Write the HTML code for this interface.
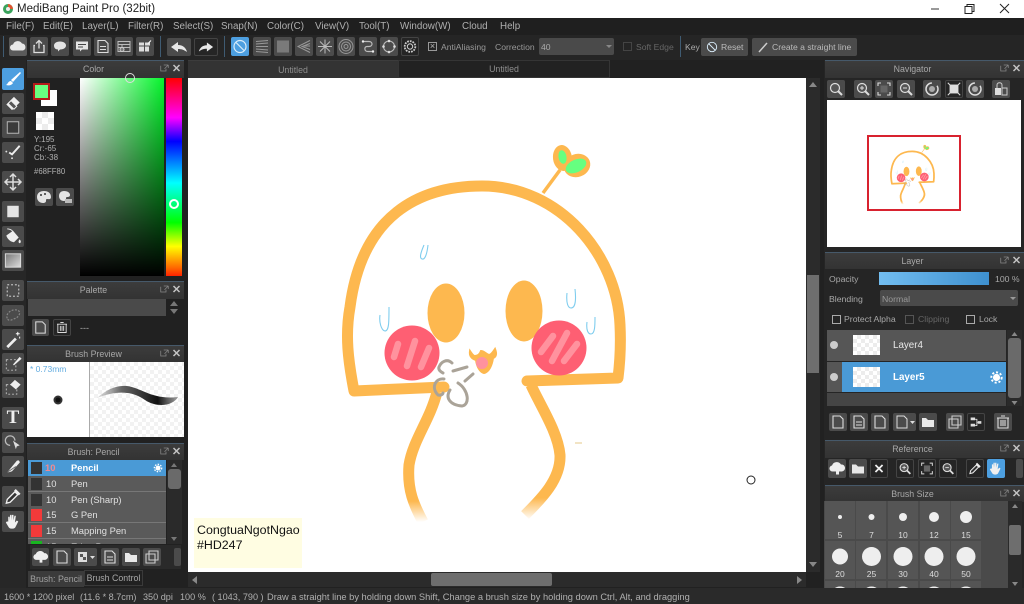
<!DOCTYPE html>
<html><head><meta charset="utf-8"><title>MediBang Paint Pro</title>
<style>
html,body{margin:0;padding:0;background:#222}
#r{position:relative;width:1024px;height:604px;overflow:hidden;background:#212121;font-family:"Liberation Sans",sans-serif;font-size:10px;color:#b0b0b0}
#r div,#r span,#r i{position:absolute;display:block;font-style:normal}
.t{white-space:nowrap;line-height:14px}
.m{font-size:9.800px;top:20px;color:#b0b0b0}
.tb{font-size:8.600px;top:40px;color:#999}
.p{font-size:8.700px;color:#a8a8a8}
.st{font-size:9.100px;top:590px;color:#b0b0b0}
.br{font-size:9.400px;color:#e0e0e0}
.b{background:#4b4b4b;border-radius:2px}
.d{background:#252525;border:1px solid #444;box-sizing:border-box;border-radius:2px}
.b svg,.d svg{position:absolute;left:0;top:0;width:100%;height:100%}
.h{background:linear-gradient(#3c3c3c,#333);border-top:1px solid #46596a;box-sizing:border-box;text-align:center;line-height:17px;color:#a8a8a8;font-size:8.800px;padding-right:24px;white-space:nowrap}
.row{left:0;width:138px;height:15px;background:#5a5a5a;border-bottom:1px solid #777}
.c{background:#555;width:30px;height:38px}
.ck{background:repeating-conic-gradient(#ececec 0 25%,#fff 0 50%) 0 0/8px 8px}
</style></head><body><div id="r">
<svg width="0" height="0" style="position:absolute"><defs>
<symbol id="cloud" viewBox="0 0 18 18"><path d="M4 13a3 3 0 0 1 0-6 5 5 0 0 1 9-1 3.600 3.600 0 0 1 1 7z" fill="#e8e8e8"/></symbol>
<symbol id="share" viewBox="0 0 18 18"><path d="M5 8H4v7h10V8h-1M9 11V3M6 6l3-3 3 3" fill="none" stroke="#ddd" stroke-width="1.300"/></symbol>
<symbol id="bub" viewBox="0 0 18 18"><path d="M9 4c4 0 6 2 6 4s-2 4-6 4l-2 2v-2c-3 0-4-2-4-4s2-4 6-4z" fill="#e4e4e4"/></symbol>
<symbol id="com" viewBox="0 0 18 18"><path d="M3 4h12v8H9l-2 2v-2H3z" fill="#e4e4e4"/><path d="M5 7h8M5 9.500h5" stroke="#444"/></symbol>
<symbol id="doc" viewBox="0 0 18 18"><path d="M4 3h7l3 3v9H4zM6 9h6M6 12h6" fill="none" stroke="#ddd" stroke-width="1.100"/></symbol>
<symbol id="tab" viewBox="0 0 18 18"><path d="M3 4h12v10H3zM3 7h12M3 10h12M7 7v7" fill="none" stroke="#bbb"/><circle cx="7" cy="12" r="2" fill="#777" stroke="#ccc"/></symbol>
<symbol id="mat" viewBox="0 0 18 18"><path d="M3 5h5v3H3zM9 5h5v3H9zM3 9h5v5H3zM9 9h4v5H9z" fill="#ddd"/><path d="M12 6l3-3" stroke="#fff"/></symbol>
<symbol id="und" viewBox="0 0 24 18"><path d="M11 4L4 9l7 5v-3c4 0 6 1 9 3-1-4-4-7-9-7z" fill="#e8e8e8"/></symbol>
<symbol id="red" viewBox="0 0 24 18"><path d="M13 4l7 5-7 5v-3c-4 0-6 1-9 3 1-4 4-7 9-7z" fill="#e8e8e8"/></symbol>
<symbol id="no" viewBox="0 0 18 18"><circle cx="9" cy="9" r="6" fill="none" stroke="#d9ecfa" stroke-width="1.200"/><path d="M5 5l8 8" stroke="#d9ecfa" stroke-width="1.200"/></symbol>
<symbol id="hl" viewBox="0 0 18 18"><path d="M3 4l12-1M3 6.500l12-1M3 9h12M3 11.500l12 1M3 14l12 1" stroke="#999"/></symbol>
<symbol id="vl" viewBox="0 0 18 18"><path d="M4 3v12M6 3v12M8 3v12M10 3v12M12 3v12M14 3v12" stroke="#aaa"/></symbol>
<symbol id="pe" viewBox="0 0 18 18"><path d="M15 3L3 9l12 6M15 6L7 9l8 3M15 8.500H9" fill="none" stroke="#999"/></symbol>
<symbol id="rad" viewBox="0 0 18 18"><path d="M9 2v14M2 9h14M4 4l10 10M14 4L4 14" stroke="#bbb"/></symbol>
<symbol id="con" viewBox="0 0 18 18"><circle cx="9" cy="9" r="7" fill="none" stroke="#999"/><circle cx="9" cy="9" r="4.500" fill="none" stroke="#999"/><circle cx="9" cy="9" r="2" fill="none" stroke="#999"/></symbol>
<symbol id="cur" viewBox="0 0 18 18"><path d="M4 4h6c4 0 4 5 0 5H8c-3 0-3 5 1 5h5" fill="none" stroke="#bbb" stroke-width="1.200"/><circle cx="4" cy="4" r="1.200" fill="#eee"/><circle cx="14" cy="14" r="1.200" fill="#eee"/></symbol>
<symbol id="ring" viewBox="0 0 18 18"><circle cx="9" cy="9" r="5.500" fill="none" stroke="#bbb" stroke-width="1.100"/><circle cx="9" cy="3.500" r="1.300" fill="#ddd"/><circle cx="14.500" cy="9" r="1.300" fill="#ddd"/><circle cx="9" cy="14.500" r="1.300" fill="#ddd"/><circle cx="3.500" cy="9" r="1.300" fill="#ddd"/></symbol>
<symbol id="gear" viewBox="0 0 18 18"><circle cx="9" cy="9" r="3" fill="none" stroke="#ccc" stroke-width="1.200"/><circle cx="9" cy="9" r="6" fill="none" stroke="#ccc" stroke-width="2" stroke-dasharray="2 1.100"/></symbol>
<symbol id="brush" viewBox="0 0 22 22"><path d="M18 4L9 12l2 2 8-9z" fill="#fff"/><path d="M9 13c-3 0-3 3-5 4 3 1 6 0 7-2z" fill="#fff"/></symbol>
<symbol id="er" viewBox="0 0 22 22"><path d="M12 4l6 6-8 8-6-6z" fill="#eee"/><path d="M9 8l6 6-3 3-6-6z" fill="#555" stroke="#eee"/></symbol>
<symbol id="sq" viewBox="0 0 22 22"><rect x="5" y="5" width="12" height="12" fill="#3a3a3a" stroke="#bbb"/></symbol>
<symbol id="ln" viewBox="0 0 22 22"><path d="M18 4L10 13l-3-2" fill="none" stroke="#eee" stroke-width="2"/><circle cx="4" cy="10" r="1" fill="#ddd"/><circle cx="10" cy="17" r="1" fill="#ddd"/></symbol>
<symbol id="mv" viewBox="0 0 22 22"><path d="M11 3v16M3 11h16M8 6l3-3 3 3M8 16l3 3 3-3M6 8l-3 3 3 3M16 8l3 3-3 3" fill="none" stroke="#ddd" stroke-width="1.500"/></symbol>
<symbol id="fs" viewBox="0 0 22 22"><rect x="5" y="5" width="12" height="12" fill="#e4e4e4"/></symbol>
<symbol id="bk" viewBox="0 0 22 22"><path d="M4 10l7-5 6 7-5 5c-3 0-7-3-8-7z" fill="#eee"/><path d="M5 3c2 0 5 1 6 3" stroke="#eee" fill="none"/><path d="M18 14c2 2 1 4 0 4s-2-2 0-4z" fill="#eee"/></symbol>
<symbol id="gr" viewBox="0 0 22 22"><defs><linearGradient id="gg" x1="0" x2="1" y1="0" y2="1"><stop offset="0" stop-color="#777"/><stop offset="1" stop-color="#ddd"/></linearGradient></defs><rect x="3" y="4" width="16" height="14" fill="url(#gg)" stroke="#ddd"/></symbol>
<symbol id="sl" viewBox="0 0 22 22"><rect x="5" y="5" width="12" height="12" fill="none" stroke="#bbb" stroke-width="1.300" stroke-dasharray="2 2"/></symbol>
<symbol id="ls" viewBox="0 0 22 22"><path d="M5 14c-2-4 3-9 8-9s6 3 4 6-4 3-6 4-5 2-6-1z" fill="none" stroke="#888" stroke-width="1.200" stroke-dasharray="2 1.500"/></symbol>
<symbol id="wd" viewBox="0 0 22 22"><path d="M4 18l9-9 2 2-9 9z" fill="#eee"/><path d="M16 3v4M14 5h4M18 8v2" stroke="#fff"/></symbol>
<symbol id="spn" viewBox="0 0 22 22"><rect x="4" y="7" width="10" height="11" fill="none" stroke="#bbb" stroke-dasharray="2 2"/><path d="M18 4l-7 8 1 1 8-7z" fill="#eee"/></symbol>
<symbol id="ser" viewBox="0 0 22 22"><rect x="4" y="8" width="11" height="10" fill="none" stroke="#bbb" stroke-dasharray="2 2"/><path d="M13 3l6 5-5 5-6-5z" fill="#eee"/></symbol>
<symbol id="tool" viewBox="0 0 22 22"><path d="M8 14a5 5 0 1 1 5-5" fill="none" stroke="#bbb" stroke-width="1.300"/><path d="M11 9l7 5-3 1-1 3z" fill="#ddd"/></symbol>
<symbol id="kn" viewBox="0 0 22 22"><path d="M5 17L15 5c2-1 3 0 3 2L10 16c-2 1-4 1-5 1z" fill="#eee"/><path d="M5 17l9-6" stroke="#666"/></symbol>
<symbol id="ey" viewBox="0 0 22 22"><path d="M5 14l8-8 3 3-8 8-4 1z" fill="#333" stroke="#eee" stroke-width="1.400"/><path d="M13 4l5 5" stroke="#eee" stroke-width="2.500"/></symbol>
<symbol id="hand" viewBox="0 0 22 22"><path d="M6 11V6h1.500v4l.5-6h1.500v6l.5-6h1.500v6l1-5h1.500l-1 7 2-2 1.500 1-3 6c-1 2-6 2-7 0l-3-5 1-1z" fill="#f0f0f0"/></symbol>
<symbol id="mg" viewBox="0 0 18 18"><circle cx="8" cy="8" r="4.500" fill="#555" stroke="#ddd" stroke-width="1.200"/><path d="M11 11l4 4" stroke="#ddd" stroke-width="2"/></symbol>
<symbol id="mgp" viewBox="0 0 18 18"><use href="#mg"/><path d="M6 8h4M8 6v4" stroke="#ddd"/></symbol>
<symbol id="mgm" viewBox="0 0 18 18"><use href="#mg"/><path d="M6 8h4" stroke="#ddd"/></symbol>
<symbol id="fit" viewBox="0 0 18 18"><path d="M3 6V3h3M12 3h3v3M15 12v3h-3M6 15H3v-3" fill="none" stroke="#ddd" stroke-width="1.100"/><rect x="5.500" y="5.500" width="7" height="7" fill="#666"/></symbol>
<symbol id="fit2" viewBox="0 0 18 18"><rect x="4" y="4" width="10" height="10" fill="#ddd"/><path d="M2 2l3 3M16 2l-3 3M2 16l3-3M16 16l-3-3" stroke="#ddd" stroke-width="1.200"/></symbol>
<symbol id="rot" viewBox="0 0 18 18"><circle cx="9" cy="9" r="6" fill="none" stroke="#ddd" stroke-width="1.500" stroke-dasharray="28 6"/><circle cx="9" cy="9" r="3" fill="#aaa"/></symbol>
<symbol id="lockic" viewBox="0 0 18 18"><rect x="3" y="8" width="6" height="7" fill="#ddd"/><rect x="10" y="8" width="5" height="7" fill="none" stroke="#ccc"/><path d="M5 8V5c0-3 5-3 5 0v3" fill="none" stroke="#ccc"/></symbol>
<symbol id="new" viewBox="0 0 18 18"><path d="M4 3h7l3 3v9H4z" fill="none" stroke="#ddd" stroke-width="1.100"/></symbol>
<symbol id="trash" viewBox="0 0 18 18"><path d="M4 5h10v10H4zM3 5h12M7 3h4M7 7v6M9 7v6M11 7v6" fill="none" stroke="#ddd" stroke-width="1.100"/></symbol>
<symbol id="fold" viewBox="0 0 18 18"><path d="M3 5h4l2 2h6v7H3z" fill="#e8e8e8"/></symbol>
<symbol id="dup" viewBox="0 0 18 18"><path d="M6 3h9v9H6zM3 6h9v9H3z" fill="none" stroke="#ccc" stroke-width="1.100"/></symbol>
<symbol id="up" viewBox="0 0 18 18"><path d="M5 12a3 3 0 0 1-1-6 5 5 0 0 1 9-1 3.500 3.500 0 0 1 1 7h-3v3H8v-3z" fill="#eee"/></symbol>
<symbol id="pal" viewBox="0 0 18 18"><path d="M9 3c4 0 7 2 7 6 0 3-3 2-4 2s-1 1-1 2-1 2-3 2c-3 0-6-2-6-6s3-6 7-6z" fill="#e4e4e4"/><circle cx="6" cy="7" r="1" fill="#333"/><circle cx="10" cy="6" r="1" fill="#333"/></symbol>
<symbol id="pal2" viewBox="0 0 18 18"><path d="M8 3c4 0 6 2 6 4 0 2-2 2-3 2s-1 1-1 2-1 2-2 2c-3 0-5-2-5-5s2-5 5-5z" fill="#e4e4e4"/><rect x="9" y="11" width="7" height="4" fill="#bbb"/></symbol>
<symbol id="x2" viewBox="0 0 18 18"><path d="M5 5l8 8M13 5l-8 8" stroke="#eee" stroke-width="2"/></symbol>
<symbol id="wk" viewBox="0 0 18 18"><circle cx="9" cy="9" r="3.800" fill="#fff"/><circle cx="9" cy="9" r="5.500" fill="none" stroke="#fff" stroke-width="2" stroke-dasharray="2.200 2"/></symbol>
<symbol id="hicon" viewBox="0 0 12 10"><path d="M1 2v7h7V6M5 1h6M11 1v4M11 1L6 6" fill="none" stroke="#888" stroke-width="1"/></symbol>
<symbol id="cl" viewBox="0 0 12 10"><path d="M2 1l8 8M10 1L2 9" stroke="#c4c4c4" stroke-width="2"/></symbol>
<symbol id="hd" viewBox="0 0 24 10"><use href="#hicon" width="9" height="8" y="1"/><use href="#cl" x="12" y="1" width="9" height="8"/></symbol>
</defs></svg>

<!-- Title bar -->
<div style="left:0;top:0;width:1024px;height:18px;background:#fff"></div>
<svg style="position:absolute;left:2px;top:3px" width="12" height="12"><circle cx="6" cy="6" r="5" fill="#3aa35c"/><path d="M6 1a5 5 0 0 1 5 5H6z" fill="#e0532f"/><circle cx="6" cy="6" r="2" fill="#eee"/></svg>
<span class="t" style="left:17px;top:2px;color:#222;font-size:11.500px">MediBang Paint Pro (32bit)</span>
<svg style="position:absolute;left:925px;top:0" width="90" height="18"><path d="M6 9h8" stroke="#333"/><path d="M40 6.500h7v7h-7zM42 6.500V4.500h7v7h-2" fill="none" stroke="#222"/><path d="M75 4l9 9M84 4l-9 9" stroke="#222"/></svg>

<!-- Menu -->
<div style="left:0;top:18px;width:1024px;height:17px;background:#1f1f1f"></div>
<span class="t m" style="left:6px">File(F)</span>
<span class="t m" style="left:43px">Edit(E)</span>
<span class="t m" style="left:82px">Layer(L)</span>
<span class="t m" style="left:128px">Filter(R)</span>
<span class="t m" style="left:173px">Select(S)</span>
<span class="t m" style="left:221px">Snap(N)</span>
<span class="t m" style="left:267px">Color(C)</span>
<span class="t m" style="left:315px">View(V)</span>
<span class="t m" style="left:359px">Tool(T)</span>
<span class="t m" style="left:400px">Window(W)</span>
<span class="t m" style="left:462px">Cloud</span>
<span class="t m" style="left:500px">Help</span>

<!-- Toolbar -->
<div style="left:0;top:35px;width:1024px;height:25px;background:#252525"></div>
<div style="left:3px;top:36px;width:1px;height:21px;background:#3f5b72"></div>
<div style="left:160px;top:36px;width:1px;height:21px;background:#3f5b72"></div>
<div style="left:224px;top:36px;width:1px;height:21px;background:#3f5b72"></div>
<div style="left:680px;top:36px;width:1px;height:21px;background:#3f5b72"></div>
<i class="b" style="left:9px;top:37px;width:18px;height:19px;background:#5a5a5a"><svg><use href="#cloud"/></svg></i>
<i class="b" style="left:30px;top:37px;width:18px;height:19px"><svg><use href="#share"/></svg></i>
<i class="b" style="left:51px;top:37px;width:18px;height:19px"><svg><use href="#bub"/></svg></i>
<i class="b" style="left:73px;top:37px;width:18px;height:19px"><svg><use href="#com"/></svg></i>
<i class="b" style="left:94px;top:37px;width:18px;height:19px"><svg><use href="#doc"/></svg></i>
<i class="b" style="left:115px;top:37px;width:18px;height:19px"><svg><use href="#tab"/></svg></i>
<i class="b" style="left:136px;top:37px;width:18px;height:19px"><svg><use href="#mat"/></svg></i>
<i class="b" style="left:167px;top:38px;width:24px;height:18px"><svg><use href="#und"/></svg></i>
<i class="d" style="left:194px;top:38px;width:24px;height:18px"><svg><use href="#red"/></svg></i>
<i class="b" style="left:231px;top:37px;width:18px;height:19px;background:#4d9fe0"><svg><use href="#no"/></svg></i>
<i class="b" style="left:253px;top:37px;width:18px;height:19px"><svg><use href="#hl"/></svg></i>
<i class="b" style="left:274px;top:37px;width:18px;height:19px"><svg><use href="#vl"/></svg></i>
<i class="b" style="left:295px;top:37px;width:18px;height:19px"><svg><use href="#pe"/></svg></i>
<i class="b" style="left:316px;top:37px;width:18px;height:19px"><svg><use href="#rad"/></svg></i>
<i class="b" style="left:337px;top:37px;width:18px;height:19px"><svg><use href="#con"/></svg></i>
<i class="b" style="left:359px;top:37px;width:18px;height:19px"><svg><use href="#cur"/></svg></i>
<i class="b" style="left:380px;top:37px;width:18px;height:19px"><svg><use href="#ring"/></svg></i>
<i class="d" style="left:401px;top:37px;width:18px;height:19px"><svg><use href="#gear"/></svg></i>
<div style="left:428px;top:42px;width:9px;height:9px;border:1px solid #999;box-sizing:border-box;color:#bbb;font-size:9px;line-height:7px;text-align:center">×</div>
<span class="t tb" style="left:441px">AntiAliasing</span>
<span class="t tb" style="left:495px">Correction</span>
<div style="left:539px;top:38px;width:75px;height:17px;background:#4a4a4a;border-radius:2px"></div>
<span class="t tb" style="left:541px;color:#aaa">40</span>
<div style="left:606px;top:45px;width:0;height:0;border:3px solid transparent;border-top:3px solid #888"></div>
<div style="left:623px;top:42px;width:9px;height:9px;border:1px solid #444;box-sizing:border-box"></div>
<span class="t tb" style="left:636px;color:#666">Soft Edge</span>
<span class="t tb" style="left:685px;color:#aaa">Key</span>
<div class="b" style="left:701px;top:38px;width:47px;height:18px"></div>
<svg style="position:absolute;left:705px;top:40px" width="14" height="14"><use href="#no" width="14" height="14"/></svg>
<span class="t tb" style="left:721px;color:#bbb">Reset</span>
<div class="b" style="left:752px;top:38px;width:105px;height:18px"></div>
<svg style="position:absolute;left:757px;top:41px" width="12" height="12"><path d="M2 11L10 2" stroke="#ccc" stroke-width="1.500"/></svg>
<span class="t tb" style="left:772px;color:#bbb">Create a straight line</span>

<!-- Tabs -->
<div style="left:188px;top:60px;width:210px;height:18px;background:#333;border-top:1px solid #3c3c3c;box-sizing:border-box;text-align:center;line-height:18px;color:#8e8e8e;font-size:8.800px">Untitled</div>
<div style="left:398px;top:60px;width:212px;height:18px;background:#222;border:1px solid #353535;box-sizing:border-box;text-align:center;line-height:17px;color:#8e8e8e;font-size:8.800px">Untitled</div>

<!-- Left tool column -->
<div style="left:0;top:60px;width:26px;height:528px;background:#272727"></div>
<i class="b" style="left:2px;top:68px;width:22px;height:22px;background:#4d9fe0"><svg><use href="#brush"/></svg></i>
<i class="b" style="left:2px;top:93px;width:22px;height:21px"><svg><use href="#er"/></svg></i>
<i class="b" style="left:2px;top:117px;width:22px;height:21px"><svg><use href="#sq"/></svg></i>
<i class="b" style="left:2px;top:142px;width:22px;height:21px"><svg><use href="#ln"/></svg></i>
<i class="b" style="left:2px;top:171px;width:22px;height:22px"><svg><use href="#mv"/></svg></i>
<i class="b" style="left:2px;top:201px;width:22px;height:21px"><svg><use href="#fs"/></svg></i>
<i class="b" style="left:2px;top:226px;width:22px;height:21px"><svg><use href="#bk"/></svg></i>
<i class="b" style="left:2px;top:250px;width:22px;height:21px"><svg><use href="#gr"/></svg></i>
<i class="b" style="left:2px;top:280px;width:22px;height:21px"><svg><use href="#sl"/></svg></i>
<i class="b" style="left:2px;top:305px;width:22px;height:21px"><svg><use href="#ls"/></svg></i>
<i class="b" style="left:2px;top:329px;width:22px;height:21px"><svg><use href="#wd"/></svg></i>
<i class="b" style="left:2px;top:353px;width:22px;height:21px"><svg><use href="#spn"/></svg></i>
<i class="b" style="left:2px;top:377px;width:22px;height:21px"><svg><use href="#ser"/></svg></i>
<i class="b" style="left:2px;top:407px;width:22px;height:22px;text-align:center;font:bold 19px/22px 'Liberation Serif',serif;color:#eee">T</i>
<i class="b" style="left:2px;top:432px;width:22px;height:21px"><svg><use href="#tool"/></svg></i>
<i class="b" style="left:2px;top:456px;width:22px;height:21px"><svg><use href="#kn"/></svg></i>
<i class="b" style="left:2px;top:486px;width:22px;height:21px"><svg><use href="#ey"/></svg></i>
<i class="b" style="left:2px;top:511px;width:22px;height:21px"><svg><use href="#hand"/></svg></i>

<!-- Color panel -->
<div class="h" style="left:27px;top:60px;width:157px;height:18px">Color</div>
<svg style="position:absolute;left:160px;top:63px" width="24" height="10"><use href="#hd"/></svg>
<div style="left:80px;top:78px;width:84px;height:198px;background:linear-gradient(to top,#000,rgba(0,0,0,0)),linear-gradient(to right,#fff,#05f52c)"></div>
<div style="left:166px;top:78px;width:16px;height:198px;background:linear-gradient(#f00 0,#f0f 20%,#00f 32%,#0ff 53%,#0f0 73%,#ff0 85%,#f60 96%,#f20 100%)"></div>
<div style="left:125px;top:73px;width:10px;height:10px;border:1px solid #ddd;border-radius:50%;box-sizing:border-box"></div>
<div style="left:169px;top:199px;width:10px;height:10px;border:2px solid #fff;border-radius:50%;box-sizing:border-box"></div>
<div style="left:41px;top:90px;width:16px;height:16px;background:#fff"></div>
<div style="left:33px;top:83px;width:17px;height:17px;background:#68ff80;border:2px solid #b51a1a;box-sizing:border-box"></div>
<div class="ck" style="left:36px;top:112px;width:18px;height:18px;background-size:12px 12px"></div>
<span class="t" style="left:34px;top:133px;font-size:8px">Y:195</span>
<span class="t" style="left:34px;top:142px;font-size:8px">Cr:-65</span>
<span class="t" style="left:34px;top:151px;font-size:8px">Cb:-38</span>
<span class="t" style="left:34px;top:165px;font-size:7.800px">#68FF80</span>
<i class="b" style="left:35px;top:188px;width:18px;height:18px"><svg><use href="#pal"/></svg></i>
<i class="b" style="left:56px;top:188px;width:18px;height:18px"><svg><use href="#pal2"/></svg></i>

<!-- Palette -->
<div class="h" style="left:27px;top:281px;width:157px;height:18px">Palette</div>
<svg style="position:absolute;left:160px;top:284px" width="24" height="10"><use href="#hd"/></svg>
<div style="left:28px;top:299px;width:138px;height:17px;background:#4a4a4a"></div>
<svg style="position:absolute;left:168px;top:300px" width="12" height="15"><path d="M6 1l4 5H2zM6 14l4-5H2z" fill="#777"/></svg>
<i class="b" style="left:32px;top:319px;width:17px;height:17px"><svg><use href="#new"/></svg></i>
<i class="d" style="left:53px;top:319px;width:18px;height:17px"><svg><use href="#trash"/></svg></i>
<span class="t" style="left:80px;top:321px;font-size:9px">---</span>

<!-- Brush preview -->
<div class="h" style="left:27px;top:345px;width:157px;height:17px">Brush Preview</div>
<svg style="position:absolute;left:160px;top:348px" width="24" height="10"><use href="#hd"/></svg>
<div style="left:27px;top:362px;width:62px;height:75px;background:#fff"></div>
<div style="left:89px;top:362px;width:1px;height:75px;background:#aaa"></div>
<div class="ck" style="left:90px;top:362px;width:94px;height:75px;background-image:repeating-conic-gradient(#f2f2f2 0 25%,#fff 0 50%)"></div>
<span class="t" style="left:30px;top:362px;font-size:8.500px;color:#63ace0">* 0.73mm</span>
<svg style="position:absolute;left:27px;top:362px" width="157" height="75"><defs><linearGradient id="bs"><stop offset="0" stop-color="#999" stop-opacity=".3"/><stop offset=".3" stop-color="#666"/><stop offset=".75" stop-color="#111"/><stop offset="1" stop-color="#444" stop-opacity=".5"/></linearGradient></defs>
<circle cx="31" cy="38" r="4.500" fill="#333"/><circle cx="31" cy="38" r="2.500" fill="#111"/>
<path d="M70 36C80 27 90 23 100 24C115 26 125 38 151 35C146 44 130 46 118 38C105 29 90 28 70 36z" fill="url(#bs)"/></svg>

<!-- Brush list -->
<div class="h" style="left:27px;top:443px;width:157px;height:17px">Brush: Pencil</div>
<svg style="position:absolute;left:160px;top:446px" width="24" height="10"><use href="#hd"/></svg>
<div style="left:28px;top:460px;width:138px;height:84px;background:#5a5a5a;overflow:hidden">
<div class="row" style="top:0;background:#4a9ad6;border:0;height:16px"></div>
<div class="row" style="top:16px"></div><div class="row" style="top:32px"></div><div class="row" style="top:47px"></div><div class="row" style="top:63px"></div>
<div style="left:3px;top:2px;width:11px;height:12px;background:#333"></div>
<div style="left:3px;top:18px;width:11px;height:12px;background:#333"></div>
<div style="left:3px;top:34px;width:11px;height:12px;background:#333"></div>
<div style="left:3px;top:49px;width:11px;height:12px;background:#f23a3a"></div>
<div style="left:3px;top:65px;width:11px;height:12px;background:#f23a3a"></div>
<div style="left:3px;top:81px;width:11px;height:12px;background:#18b520"></div>
<span class="t br" style="left:17px;top:1px;font-weight:bold;color:#f08a90">10</span>
<span class="t br" style="left:43px;top:1px;font-weight:bold;color:#fff">Pencil</span>
<span class="t br" style="left:18px;top:17px">10</span><span class="t br" style="left:43px;top:17px">Pen</span>
<span class="t br" style="left:18px;top:33px">10</span><span class="t br" style="left:43px;top:33px">Pen (Sharp)</span>
<span class="t br" style="left:18px;top:48px">15</span><span class="t br" style="left:43px;top:48px">G Pen</span>
<span class="t br" style="left:18px;top:64px">15</span><span class="t br" style="left:43px;top:64px">Mapping Pen</span>
<span class="t br" style="left:18px;top:80px">15</span><span class="t br" style="left:43px;top:80px">Edge Pen</span>
<svg style="position:absolute;left:124px;top:2px" width="12" height="12"><use href="#wk" width="12" height="12"/></svg>
</div>
<div style="left:167px;top:460px;width:15px;height:84px;background:#2a2a2a"></div>
<div style="left:168px;top:469px;width:13px;height:20px;background:#6a6a6a;border-radius:3px"></div>
<svg style="position:absolute;left:169px;top:462px" width="10" height="80"><path d="M5 1l3 4H2zM5 79l3-4H2z" fill="#777"/></svg>
<div style="left:30px;top:545px;width:151px;height:24px;background:#2a2a2a"></div>
<i class="b" style="left:32px;top:548px;width:17px;height:18px"><svg><use href="#up"/></svg></i>
<i class="b" style="left:53px;top:548px;width:18px;height:18px"><svg><use href="#new"/></svg></i>
<i class="b" style="left:74px;top:548px;width:23px;height:18px"><svg viewBox="0 0 23 18"><path d="M4 4h9v10H4z" fill="#ddd"/><path d="M6 6h3v3H6zM9 9h3v3H9z" fill="#555"/><path d="M16 8h5l-2.500 3z" fill="#ddd"/></svg></i>
<i class="b" style="left:101px;top:548px;width:18px;height:18px"><svg><use href="#doc"/></svg></i>
<i class="b" style="left:122px;top:548px;width:18px;height:18px"><svg><use href="#fold"/></svg></i>
<i class="b" style="left:143px;top:548px;width:18px;height:18px"><svg><use href="#dup"/></svg></i>
<div class="b" style="left:174px;top:548px;width:7px;height:18px"></div>
<div style="left:28px;top:571px;width:56px;height:16px;background:#3b3b3b;text-align:center;line-height:17px;font-size:8.800px;color:#a0a0a0;white-space:nowrap">Brush: Pencil</div>
<div style="left:84px;top:570px;width:59px;height:16px;background:#212121;border:1px solid #3a3a3a;box-sizing:border-box;text-align:center;line-height:14px;font-size:8.800px;color:#a8a8a8;white-space:nowrap">Brush Control</div>

<!-- Canvas -->
<div style="left:188px;top:78px;width:618px;height:494px;background:#fff"></div>
<svg style="position:absolute;left:0;top:0" width="1024" height="604">
<defs>
<linearGradient id="fr" gradientUnits="userSpaceOnUse" x1="0" y1="382" x2="0" y2="520"><stop offset=".84" stop-color="#fdb84f"/><stop offset="1" stop-color="#fdb84f" stop-opacity="0"/></linearGradient>
<linearGradient id="fl2" gradientUnits="userSpaceOnUse" x1="0" y1="392" x2="0" y2="522"><stop offset=".84" stop-color="#fdb84f"/><stop offset="1" stop-color="#fdb84f" stop-opacity="0"/></linearGradient>
<g id="char">
<path d="M543 193L560 170" fill="none" stroke="#fdb84f" stroke-width="3.500"/>
<ellipse cx="562.500" cy="158" rx="9.500" ry="13" transform="rotate(-8 562.500 158)" fill="#fdb84f"/>
<ellipse cx="577" cy="165.500" rx="13.500" ry="11.500" transform="rotate(-20 577 165.500)" fill="#fdb84f"/>
<ellipse cx="562.500" cy="157" rx="4" ry="6.800" transform="rotate(-10 562.500 157)" fill="#66ff80"/>
<ellipse cx="576" cy="166" rx="11" ry="6.300" transform="rotate(-25 576 166)" fill="#66ff80"/>
<path d="M444 387L354 391C348 360 345 335 350 307C362 215 419 186 482 186C560 186 617 255 620 325C621 345 620 362 618 378L527 381" fill="none" stroke="#fdb84f" stroke-width="11" stroke-linejoin="round" stroke-linecap="round"/>
<path d="M531 385C540 405 558 432 560 455C561 480 540 500 525 515" fill="none" stroke="url(#fr)" stroke-width="11"/>
<path d="M437 392C430 420 413 440 409 465C407 490 414 505 423 522" fill="none" stroke="url(#fl2)" stroke-width="11"/>
<ellipse cx="446" cy="313" rx="18.500" ry="29.500" fill="#fdb84f"/>
<ellipse cx="524" cy="311" rx="18.500" ry="30.500" fill="#fdb84f"/>
<circle cx="412" cy="353" r="27.500" fill="#fe5f73"/>
<circle cx="559" cy="348" r="27.500" fill="#fe5f73"/>
<path d="M398 344L394 357M415 341L407 366M429 348L421 367M553 336L541 352M567 333L552 361M577 344L564 361" stroke="#ff929e" stroke-width="6.500" stroke-linecap="round" fill="none"/>
<path d="M424 245C421 252 419 258 422 259C425 260 427 254 428 245M380 315C379 322 381 330 385 331C389 331 389 322 389 307M567 293C566 303 568 308 571 308C576 308 576 298 575 289M587 322C586 330 588 334 591 334C595 334 595 325 595 317" fill="none" stroke="#7fcdee" stroke-width="1.100"/>
<path d="M452 363C447 358 441 362 439 367C438 370 441 372 443 373M453 371L467 367M465 381L473 374M444 379C435 378 431 388 438 395C441 396 443 394 443 393M450 390C445 398 450 405 462 406C470 405 469 390 458 383" fill="none" stroke="#aaa398" stroke-width="3" stroke-linecap="round"/>
<path d="M470 351C469 357 473 359 476 360C477 367 480 372 484 373C489 372 492 365 493 358C496 357 497 354 495 349C493 352 491 355 489 355C486 354 484 351 481 351C480 354 478 356 475 356C473 356 472 354 470 351z" fill="#fdb84f" stroke="#fdb84f" stroke-width="2"/>
<circle cx="482" cy="363" r="6" fill="#ff929e"/>
</g></defs>
<use href="#char"/>
<path d="M575 443h7" stroke="#e5c88a"/>
<circle cx="751" cy="480" r="4" fill="none" stroke="#222"/>
</svg>
<div style="left:194px;top:518px;width:108px;height:50px;background:#fffde2"></div>
<span class="t" style="left:197px;top:523px;font-size:12.400px;line-height:15px;color:#111">CongtuaNgotNgao<br>#HD247</span>

<!-- Canvas scrollbars -->
<div style="left:806px;top:78px;width:14px;height:494px;background:#2b2b2b"></div>
<div style="left:807px;top:275px;width:12px;height:98px;background:#6e6e6e"></div>
<svg style="position:absolute;left:808px;top:81px" width="10" height="8"><path d="M5 1l4 5H1z" fill="#888"/></svg>
<svg style="position:absolute;left:808px;top:560px" width="10" height="8"><path d="M5 7l4-5H1z" fill="#888"/></svg>
<div style="left:188px;top:572px;width:618px;height:15px;background:#2b2b2b"></div>
<div style="left:431px;top:573px;width:121px;height:13px;background:#6e6e6e;border-radius:2px"></div>
<svg style="position:absolute;left:191px;top:575px" width="8" height="10"><path d="M1 5l5-4v8z" fill="#888"/></svg>
<svg style="position:absolute;left:795px;top:575px" width="8" height="10"><path d="M7 5L2 1v8z" fill="#888"/></svg>

<!-- Right panels -->
<div style="left:824px;top:60px;width:200px;height:528px;background:#252525"></div>
<div class="h" style="left:825px;top:60px;width:199px;height:18px">Navigator</div>
<svg style="position:absolute;left:1000px;top:63px" width="24" height="10"><use href="#hd"/></svg>
<i class="b" style="left:827px;top:80px;width:18px;height:18px"><svg><use href="#mg"/></svg></i>
<i class="b" style="left:854px;top:80px;width:18px;height:18px"><svg><use href="#mgp"/></svg></i>
<i class="b" style="left:875px;top:80px;width:18px;height:18px"><svg><use href="#fit"/></svg></i>
<i class="b" style="left:897px;top:80px;width:18px;height:18px"><svg><use href="#mgm"/></svg></i>
<i class="b" style="left:923px;top:80px;width:18px;height:18px"><svg><use href="#rot"/></svg></i>
<i class="d" style="left:945px;top:80px;width:18px;height:18px"><svg><use href="#fit2"/></svg></i>
<i class="b" style="left:966px;top:80px;width:18px;height:18px"><svg><use href="#rot"/></svg></i>
<i class="b" style="left:992px;top:80px;width:18px;height:18px"><svg><use href="#lockic"/></svg></i>
<div style="left:827px;top:100px;width:194px;height:147px;background:#fff"></div>
<div style="left:867px;top:135px;width:94px;height:76px;border:2px solid #d8222f;box-sizing:border-box"></div>
<svg style="position:absolute;left:0;top:0" width="1024" height="604"><use href="#char" transform="translate(836 122) scale(.158)"/></svg>

<div class="h" style="left:825px;top:252px;width:199px;height:17px">Layer</div>
<svg style="position:absolute;left:1000px;top:255px" width="24" height="10"><use href="#hd"/></svg>
<span class="t p" style="left:829px;top:272px">Opacity</span>
<div style="left:879px;top:272px;width:110px;height:13px;background:linear-gradient(to right,#72bdf0,#3e90cf)"></div>
<span class="t p" style="left:995px;top:272px">100 %</span>
<span class="t p" style="left:829px;top:292px">Blending</span>
<div style="left:880px;top:290px;width:138px;height:16px;background:#4a4a4a;border-radius:2px"></div>
<span class="t p" style="left:882px;top:292px;color:#999">Normal</span>
<div style="left:1010px;top:297px;width:0;height:0;border:3px solid transparent;border-top:3px solid #999"></div>
<div style="left:832px;top:315px;width:9px;height:9px;border:1px solid #aaa;box-sizing:border-box"></div>
<span class="t p" style="left:844px;top:312px">Protect Alpha</span>
<div style="left:905px;top:315px;width:9px;height:9px;border:1px solid #555;box-sizing:border-box"></div>
<span class="t p" style="left:918px;top:312px;color:#666">Clipping</span>
<div style="left:966px;top:315px;width:9px;height:9px;border:1px solid #aaa;box-sizing:border-box"></div>
<span class="t p" style="left:979px;top:312px">Lock</span>
<div style="left:827px;top:330px;width:179px;height:31px;background:#565656"></div>
<div style="left:827px;top:362px;width:15px;height:30px;background:#565656"></div>
<div style="left:842px;top:362px;width:164px;height:30px;background:#4a9ad6"></div>
<div style="left:827px;top:393px;width:179px;height:13px;background:#454545"></div>
<div style="left:830px;top:341px;width:8px;height:8px;border-radius:50%;background:#ccc"></div>
<div style="left:830px;top:373px;width:8px;height:8px;border-radius:50%;background:#ccc"></div>
<div class="ck" style="left:853px;top:335px;width:27px;height:20px"></div>
<div class="ck" style="left:853px;top:367px;width:27px;height:20px"></div>
<span class="t" style="left:893px;top:339px;font-size:9.800px;color:#e8e8e8">Layer4</span>
<span class="t" style="left:893px;top:371px;font-size:9.800px;font-weight:bold;color:#fff">Layer5</span>
<svg style="position:absolute;left:988px;top:369px" width="17" height="17"><use href="#wk" width="17" height="17"/></svg>
<div style="left:1007px;top:330px;width:15px;height:76px;background:#2a2a2a"></div>
<div style="left:1008px;top:338px;width:13px;height:60px;background:#6a6a6a;border-radius:3px"></div>
<svg style="position:absolute;left:1009px;top:331px" width="11" height="75"><path d="M5.500 1l3 4h-6zM5.500 74l3-4h-6z" fill="#888"/></svg>
<i class="b" style="left:829px;top:413px;width:18px;height:18px"><svg><use href="#new"/></svg></i>
<i class="b" style="left:850px;top:413px;width:18px;height:18px"><svg><use href="#doc"/></svg></i>
<i class="b" style="left:871px;top:413px;width:18px;height:18px"><svg><use href="#new"/></svg></i>
<i class="b" style="left:893px;top:413px;width:23px;height:18px"><svg viewBox="0 0 23 18"><path d="M4 3h7l3 3v9H4z" fill="none" stroke="#ddd"/><path d="M17 8h5l-2.500 3z" fill="#ddd"/></svg></i>
<i class="b" style="left:919px;top:413px;width:18px;height:18px"><svg><use href="#fold"/></svg></i>
<i class="b" style="left:946px;top:413px;width:18px;height:18px"><svg><use href="#dup"/></svg></i>
<i class="d" style="left:967px;top:413px;width:18px;height:18px"><svg viewBox="0 0 18 18"><path d="M3 4h5v3H3zM3 11h5v3H3zM11 8h4v3h-4z" fill="#ddd"/><path d="M8 6h2v7H8M10 9.500h1" stroke="#ddd" fill="none"/></svg></i>
<i class="b" style="left:994px;top:413px;width:18px;height:18px"><svg><use href="#trash"/></svg></i>

<div class="h" style="left:825px;top:440px;width:199px;height:18px">Reference</div>
<svg style="position:absolute;left:1000px;top:443px" width="24" height="10"><use href="#hd"/></svg>
<i class="b" style="left:828px;top:459px;width:18px;height:19px"><svg><use href="#up"/></svg></i>
<i class="b" style="left:849px;top:459px;width:18px;height:19px"><svg><use href="#fold"/></svg></i>
<i class="d" style="left:870px;top:459px;width:18px;height:19px"><svg><use href="#x2"/></svg></i>
<i class="d" style="left:896px;top:459px;width:18px;height:19px"><svg><use href="#mgp"/></svg></i>
<i class="d" style="left:918px;top:459px;width:18px;height:19px"><svg><use href="#fit"/></svg></i>
<i class="d" style="left:939px;top:459px;width:18px;height:19px"><svg><use href="#mgm"/></svg></i>
<i class="d" style="left:966px;top:459px;width:18px;height:19px"><svg><use href="#ey"/></svg></i>
<i class="b" style="left:987px;top:459px;width:18px;height:19px;background:#4d9fe0"><svg><use href="#hand"/></svg></i>
<div class="b" style="left:1016px;top:459px;width:7px;height:19px"></div>

<div class="h" style="left:825px;top:485px;width:199px;height:17px">Brush Size</div>
<svg style="position:absolute;left:1000px;top:488px" width="24" height="10"><use href="#hd"/></svg>
<div style="left:824px;top:501px;width:184px;height:87px;background:#4a4a4a"></div>
<div class="c" style="left:825px;top:501px"></div><div class="c" style="left:856px;top:501px"></div><div class="c" style="left:888px;top:501px"></div><div class="c" style="left:920px;top:501px"></div><div class="c" style="left:951px;top:501px"></div>
<div class="c" style="left:825px;top:541px"></div><div class="c" style="left:856px;top:541px"></div><div class="c" style="left:888px;top:541px"></div><div class="c" style="left:920px;top:541px"></div><div class="c" style="left:951px;top:541px"></div>
<div class="c" style="left:825px;top:581px;height:7px"></div><div class="c" style="left:856px;top:581px;height:7px"></div><div class="c" style="left:888px;top:581px;height:7px"></div><div class="c" style="left:920px;top:581px;height:7px"></div><div class="c" style="left:951px;top:581px;height:7px"></div>
<svg style="position:absolute;left:824px;top:501px" width="160" height="87"><g fill="#eee">
<circle cx="16" cy="16" r="2"/><circle cx="47.500" cy="16" r="3"/><circle cx="79" cy="16" r="4"/><circle cx="110" cy="16" r="5"/><circle cx="142" cy="16" r="6"/>
<circle cx="16" cy="55.500" r="8"/><circle cx="47.500" cy="55.500" r="9.500"/><circle cx="79" cy="55.500" r="9.500"/><circle cx="110" cy="55.500" r="9.500"/><circle cx="142" cy="55.500" r="9.500"/>
<circle cx="16" cy="95" r="9.500"/><circle cx="47.500" cy="95" r="9.500"/><circle cx="79" cy="95" r="9.500"/><circle cx="110" cy="95" r="9.500"/><circle cx="142" cy="95" r="9.500"/></g>
<g fill="#ddd" font-family="Liberation Sans, sans-serif" font-size="8.500" text-anchor="middle">
<text x="16" y="37">5</text><text x="47.500" y="37">7</text><text x="79" y="37">10</text><text x="110" y="37">12</text><text x="142" y="37">15</text>
<text x="16" y="76">20</text><text x="47.500" y="76">25</text><text x="79" y="76">30</text><text x="110" y="76">40</text><text x="142" y="76">50</text></g></svg>
<div style="left:1008px;top:501px;width:14px;height:87px;background:#2a2a2a"></div>
<div style="left:1009px;top:525px;width:12px;height:30px;background:#6e6e6e;border-radius:2px"></div>
<svg style="position:absolute;left:1010px;top:503px" width="10" height="84"><path d="M5 1l3 4H2zM5 83l3-4H2z" fill="#888"/></svg>

<!-- Status -->
<div style="left:0;top:588px;width:1024px;height:16px;background:#2a2a2a"></div>
<span class="t st" style="left:4px">1600 * 1200 pixel</span>
<span class="t st" style="left:80px">(11.6 * 8.7cm)</span>
<span class="t st" style="left:143px">350 dpi</span>
<span class="t st" style="left:180px">100 %</span>
<span class="t st" style="left:212px">( 1043, 790 )</span>
<span class="t st" style="left:267px;font-size:9.300px">Draw a straight line by holding down Shift, Change a brush size by holding down Ctrl, Alt, and dragging</span>
</div></body></html>
